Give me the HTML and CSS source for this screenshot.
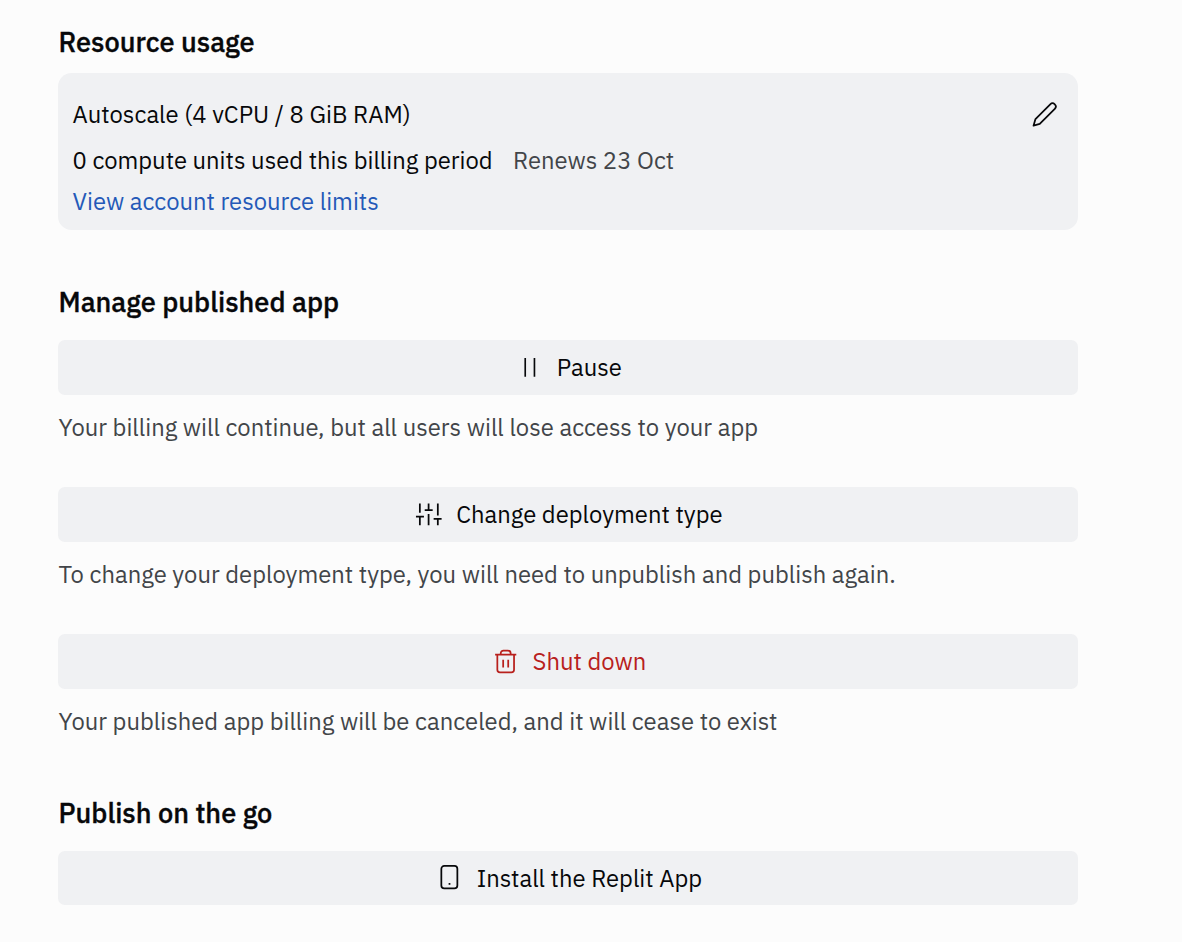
FILE: index.html
```html
<!DOCTYPE html>
<html lang="en">
<head>
<meta charset="utf-8">
<title>Manage published app</title>
<link rel="stylesheet" href="styles.css">
</head>
<body>
<main class="page">
  <section class="section">
    <h2 class="heading">Resource usage</h2>
    <div class="card">
      <div class="card-row">
        <span>Autoscale (4 vCPU / 8 GiB RAM)</span>
        <svg class="icon" viewBox="0 0 28 28"><path d="M19.800 3.400a3.300 3.300 0 0 1 4.700 4.700L9 23.600L2.600 25.400L4.600 18.600Z"/></svg>
      </div>
      <div class="units"><span>0 compute units used this billing period</span><span class="renews">Renews 23 Oct</span></div>
      <a class="link">View account resource limits</a>
    </div>
  </section>
  <section class="section">
    <h2 class="heading">Manage published app</h2>
    <div class="actions">
      <div class="action">
        <button class="button"><svg class="icon thin" viewBox="0 0 28 28"><path d="M9.500 4v19.500M19 4v19.500"/></svg><span class="label">Pause</span></button>
        <p class="note">Your billing will continue, but all users will lose access to your app</p>
      </div>
      <div class="action">
        <button class="button"><svg class="icon" viewBox="0 0 28 28"><path d="M5 2.500v9.500M5 16v9M14 2.500v7M14 13.500v11.500M23.500 2.500v12.500M23.500 19v6M1 16h8.200M10 9.300h8.200M19.200 18.500h8.200"/></svg><span class="label">Change deployment type</span></button>
        <p class="note">To change your deployment type, you will need to unpublish and publish again.</p>
      </div>
      <div class="action">
        <button class="button danger"><svg class="icon" viewBox="0 0 28 28"><path d="M3.200 6.800h21.800M9 6.800V5.500a2.700 2.700 0 0 1 2.700-2.700h4.800a2.700 2.700 0 0 1 2.700 2.700v1.300M5.500 6.800v15.700a2.700 2.700 0 0 0 2.700 2.700h11.800a2.700 2.700 0 0 0 2.700-2.700V6.800M11.500 12.200v8M16.700 12.200v8"/></svg><span class="label">Shut down</span></button>
        <p class="note">Your published app billing will be canceled, and it will cease to exist</p>
      </div>
    </div>
  </section>
  <section class="section last">
    <h2 class="heading">Publish on the go</h2>
    <button class="button"><svg class="icon" viewBox="0 0 28 28"><rect x="5.500" y="2" width="16.500" height="23.200" rx="3"/><path d="M13 20.500h1.800"/></svg><span class="label">Install the Replit App</span></button>
  </section>
</main>
</body>
</html>
```
FILE: styles.css
```css
* { box-sizing: border-box; }
body { margin: 0; background: #fcfcfc; color: #07080a; font: 23.8px/32px "IBM Plex Sans", "Noto Sans", sans-serif; }
.page { display: flex; flex-direction: column; gap: 56px; width: 1020px; margin-left: 58px; padding-top: 26px; }
.heading { margin: 0 0 22px; padding-left: 0.500px; font-size: 27.200px; line-height: 32px; font-weight: 500; -webkit-text-stroke: 0.350px currentColor; }
.card { height: 157px; margin-top: -7px; padding: 26px 20px 0 14.500px; border-radius: 13.600px; background: #f0f1f3; }
.card-row { display: flex; justify-content: space-between; align-items: center; }
.units { display: flex; gap: 20.400px; margin-top: 14px; }
.link { display: block; margin-top: 9px; color: #2459b8; }
.icon { flex: none; width: 27.200px; height: 27.200px; fill: none; stroke: currentColor; stroke-width: 1.800; stroke-linejoin: round; }
.thin { stroke-width: 1.700; }
.actions { display: flex; flex-direction: column; gap: 43.500px; }
.button { display: flex; align-items: center; justify-content: center; gap: 13.600px; width: 100%; height: 54.500px; padding: 0 0 0 2px; border: 0; border-radius: 6.800px; background: #f0f1f3; color: inherit; font: inherit; }
.label { padding-top: 2px; }
.note { margin: 17px 0 0; padding-left: 0.500px; }
.last { padding-top: 3px; }
.danger { color: #b8201c; }
.renews, .note { color: #424549; }
```
